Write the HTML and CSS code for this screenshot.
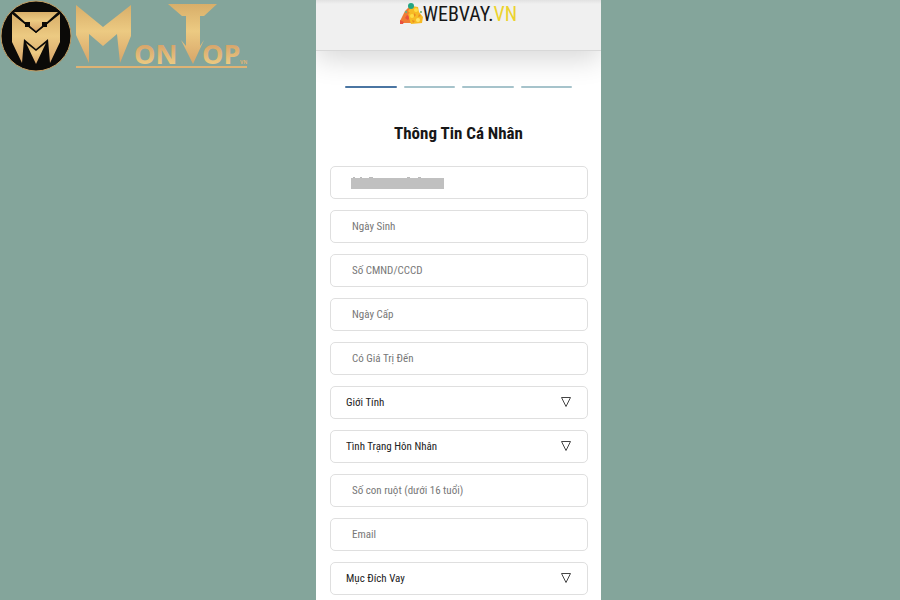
FILE: index.html
```html
<!DOCTYPE html>
<html lang="vi">
<head>
<meta charset="utf-8">
<meta name="viewport" content="width=device-width, initial-scale=1">
<title>Thông Tin Cá Nhân</title>
<link rel="stylesheet" href="styles.css">
</head>
<body>
<div class="page">
  <aside class="brand">
    <svg class="brand-logo" viewBox="0 0 250 74" role="img" aria-label="MonTop.vn">
      <defs>
        <linearGradient id="gold" x1="0" y1="0" x2="0" y2="1">
          <stop offset="0" stop-color="#d8ae69"/>
          <stop offset="0.45" stop-color="#ecca82"/>
          <stop offset="1" stop-color="#d7a468"/>
        </linearGradient>
        <linearGradient id="goldText" x1="0" y1="0" x2="0" y2="1">
          <stop offset="0.2" stop-color="#d5a067"/>
          <stop offset="0.8" stop-color="#eccb82"/>
        </linearGradient>
      </defs>
      <circle cx="36" cy="36" r="35" fill="#0b0a08" stroke="#c39d61"/>
      <path fill="url(#gold)" d="M12 14L36 33L60 14V42L50 63L48 39L36 49L24 39L22 63L12 42Z"/>
      <path fill="#0b0a08" d="M12 13L25 24V27H29L36 33L43 27H47V24L60 13Z"/>
      <path fill="url(#gold)" d="M14 12H58L47 22H42V26L36 31L30 26V22H25Z"/>
      <path fill="url(#gold)" d="M26 43L36 51L46 43L36 64Z"/>
      <path fill="url(#gold)" d="M76 5L103 27L131 5V36L120 63L117 34L103 46L89 34V63L76 35Z"/>
      <path fill="url(#gold)" d="M168 4H217L204 16H200V46L204 40L193 64L181 40L186 46V16H182Z"/>
      <path fill="#dfb374" d="M76 66H247V68H76Z"/>
      <g class="brand-text" fill="url(#goldText)">
        <text x="134" y="64">ON</text>
        <text x="202" y="64">OP</text>
      </g>
      <text class="brand-domain" x="240" y="64" fill="#dfb374">VN</text>
    </svg>
  </aside>

  <main class="panel">
    <header class="topbar">
      <a class="site" href="#">
        <svg class="site-icon" viewBox="0 0 23 21" aria-hidden="true">
          <path fill="#ef7c35" d="M0 18L5 8L9 4L14 9L13 20H2Z"/>
          <path fill="#e9503f" d="M0 17L4 19L3 21H0ZM7 12L10 14L8 17L5 15Z"/>
          <path fill="#f7ba24" d="M8 8L12 3L18 4L19 9L23 14L22 20L11 21L9 15Z"/>
          <circle cx="11" cy="3" r="3" fill="#24a582"/>
          <circle cx="16" cy="7" r="2" fill="#ffdc43"/>
          <circle cx="12" cy="13" r="2" fill="#ffdc43"/>
          <circle cx="18" cy="17" r="2" fill="#ffe263"/>
          <path fill="#ea8b22" d="M14 10L16 12L14 14ZM19 11L21 13L18 14ZM12 17L15 18L13 20ZM8 8L10 10L8 11Z"/>
          <circle cx="6" cy="9" r="1" fill="#58b98a"/>
          <circle cx="21" cy="9" r="1" fill="#68ad68"/>
        </svg>
        <span>WEBVAY.<span class="site-tld">VN</span></span>
      </a>
    </header>

    <div class="steps">
      <span class="step step-active"></span>
      <span class="step"></span>
      <span class="step"></span>
      <span class="step"></span>
    </div>

    <h1 class="title">Thông Tin Cá Nhân</h1>

    <form class="form">
      <div class="field">
        <input class="control" type="text" aria-label="Họ và tên">
        <svg class="mask" viewBox="0 0 93 12" aria-hidden="true">
          <path fill="#c0c0c0" d="M0 1H93V12H0Z"/>
          <path fill="#bbb" d="M2 0H4V1H2ZM9 0H11V1H9ZM18 0H22V1H18ZM56 0H59V1H56ZM67 0H70V1H67Z"/>
        </svg>
      </div>
      <div class="field"><input class="control" type="text" placeholder="Ngày Sinh" aria-label="Ngày Sinh"></div>
      <div class="field"><input class="control" type="text" placeholder="Số CMND/CCCD" aria-label="Số CMND/CCCD"></div>
      <div class="field"><input class="control" type="text" placeholder="Ngày Cấp" aria-label="Ngày Cấp"></div>
      <div class="field"><input class="control" type="text" placeholder="Có Giá Trị Đến" aria-label="Có Giá Trị Đến"></div>
      <div class="field">
        <select class="control control-select" aria-label="Giới Tính"><option>Giới Tính</option></select>
        <svg class="arrow" viewBox="0 0 12 12" aria-hidden="true"><path d="M1.5 1.5H10.5L6 10.5Z"/></svg>
      </div>
      <div class="field">
        <select class="control control-select" aria-label="Tình Trạng Hôn Nhân"><option>Tình Trạng Hôn Nhân</option></select>
        <svg class="arrow" viewBox="0 0 12 12" aria-hidden="true"><path d="M1.5 1.5H10.5L6 10.5Z"/></svg>
      </div>
      <div class="field"><input class="control" type="text" placeholder="Số con ruột (dưới 16 tuổi)" aria-label="Số con ruột (dưới 16 tuổi)"></div>
      <div class="field"><input class="control" type="email" placeholder="Email" aria-label="Email"></div>
      <div class="field">
        <select class="control control-select" aria-label="Mục Đích Vay"><option>Mục Đích Vay</option></select>
        <svg class="arrow" viewBox="0 0 12 12" aria-hidden="true"><path d="M1.5 1.5H10.5L6 10.5Z"/></svg>
      </div>
    </form>
  </main>
</div>
</body>
</html>
```
FILE: styles.css
```css
* {
  box-sizing: border-box;
}

body {
  margin: 0;
  background: #84a59b;
  color: #222;
  font-family: "Roboto Condensed", Lato, "Noto Sans", sans-serif;
}

.page {
  display: grid;
  grid-template-columns: 316fr 285fr 299fr;
  min-height: 100vh;
}

.brand-logo {
  display: block;
  width: 250px;
  max-width: 100%;
}

.brand-text {
  font: bold 27px "Open Sans", sans-serif;
}

.brand-domain {
  font: bold 5px "Open Sans", sans-serif;
}

.panel {
  grid-column: 2;
  overflow: hidden;
  padding-bottom: 5px;
  background: #fff;
}

.topbar {
  display: flex;
  justify-content: center;
  height: 51px;
  border-bottom: 1px solid #d8d8d8;
  background: linear-gradient(#e2e2e2, #f0f0f0 4px);
  box-shadow: 0 8px 28px rgba(0, 0, 0, 0.16);
}

.site {
  display: flex;
  align-items: flex-start;
  padding-top: 2px;
  color: #171717;
  font: 20px/24px "Roboto Condensed", sans-serif;
  text-decoration: none;
}

.site-icon {
  width: 23px;
  margin-top: 1px;
}

.site-tld {
  color: #ecd32d;
}

.steps {
  display: grid;
  grid-template-columns: repeat(4, 1fr);
  gap: 7px;
  padding: 35px 29px 0;
}

.step {
  height: 2px;
  border-radius: 1px;
  background: #a6c3cb;
}

.step-active {
  background: #4a75a2;
}

.title {
  margin: 33px 0 21px;
  color: #171717;
  font-size: 17px;
  font-weight: bold;
  line-height: 24px;
  text-align: center;
}

.form {
  display: grid;
  gap: 11px;
  padding: 0 13px 0 14px;
}

.field {
  position: relative;
  display: flex;
}

.control {
  width: 100%;
  height: 33px;
  padding: 0 21px;
  border: 1px solid #dfdfdf;
  border-radius: 5px;
  background: #fff;
  color: #222;
  font: inherit;
  font-size: 11px;
  appearance: none;
}

.control::placeholder {
  color: #777;
}

.control-select {
  padding: 0 15px;
}

.mask {
  position: absolute;
  top: 11px;
  left: 21px;
  width: 93px;
}

.arrow {
  position: absolute;
  top: 10px;
  right: 16px;
  width: 12px;
  fill: none;
  stroke: #444;
  pointer-events: none;
}
```
